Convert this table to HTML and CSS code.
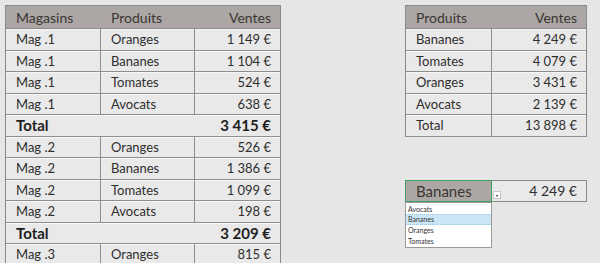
FILE: index.html
```html
<!DOCTYPE html>
<html lang="fr">
<head>
    <meta charset="UTF-8">
    <meta name="viewport" content="width=device-width, initial-scale=1.0">
    <title>Ventes par magasin</title>
    <link rel="stylesheet" href="styles.css">
</head>
<body>

<div class="feuille">

    <!-- Détail des ventes par magasin -->
    <table class="tableau detail">
        <colgroup>
            <col style="width:95px">
            <col style="width:94px">
            <col>
        </colgroup>
        <thead>
            <tr><th>Magasins</th><th>Produits</th><th class="num">Ventes</th></tr>
        </thead>
        <tbody>
            <tr><td>Mag .1</td><td>Oranges</td><td class="num">1 149 €</td></tr>
            <tr><td>Mag .1</td><td>Bananes</td><td class="num">1 104 €</td></tr>
            <tr><td>Mag .1</td><td>Tomates</td><td class="num">524 €</td></tr>
            <tr><td>Mag .1</td><td>Avocats</td><td class="num">638 €</td></tr>
            <tr class="total"><td colspan="2">Total</td><td class="num">3 415 €</td></tr>
            <tr><td>Mag .2</td><td>Oranges</td><td class="num">526 €</td></tr>
            <tr><td>Mag .2</td><td>Bananes</td><td class="num">1 386 €</td></tr>
            <tr><td>Mag .2</td><td>Tomates</td><td class="num">1 099 €</td></tr>
            <tr><td>Mag .2</td><td>Avocats</td><td class="num">198 €</td></tr>
            <tr class="total"><td colspan="2">Total</td><td class="num">3 209 €</td></tr>
            <tr><td>Mag .3</td><td>Oranges</td><td class="num">815 €</td></tr>
        </tbody>
    </table>

    <div class="colonne">
        <!-- Récapitulatif par produit -->
        <table class="tableau recap">
            <colgroup>
                <col style="width:86px">
                <col>
            </colgroup>
            <thead>
                <tr><th>Produits</th><th class="num">Ventes</th></tr>
            </thead>
            <tbody>
                <tr><td>Bananes</td><td class="num">4 249 €</td></tr>
                <tr><td>Tomates</td><td class="num">4 079 €</td></tr>
                <tr><td>Oranges</td><td class="num">3 431 €</td></tr>
                <tr><td>Avocats</td><td class="num">2 139 €</td></tr>
                <tr><td>Total</td><td class="num">13 898 €</td></tr>
            </tbody>
        </table>

        <!-- Choix du produit -->
        <div class="choix">
            <div class="cellule-choix">Bananes</div>
            <div class="cellule-valeur">4 249 €</div>
            <span class="fleche"></span>
            <ul class="liste">
                <li>Avocats</li>
                <li class="actif">Bananes</li>
                <li>Oranges</li>
                <li>Tomates</li>
            </ul>
        </div>
    </div>

</div>

</body>
</html>
```

FILE: styles.css
```css
body { margin: 0; background: #e6e6e6; font-family: Lato, "Open Sans", sans-serif; color: #2e2e2e; }
.feuille { display: flex; gap: 124px; padding: 5px; }
.colonne { display: flex; flex-direction: column; gap: 43px; }

.tableau { border-collapse: separate; border-spacing: 0; table-layout: fixed; border: 1px solid #8a8a8a; border-bottom: none; background: #e9e9e9; font-size: 13px; }
.detail { width: 276px; }
.recap { width: 182px; }
.tableau th { background: #aca7a4; color: #3a3634; font-weight: normal; text-align: left; height: 22px; padding: 0 10px; border-bottom: 1px solid #8a8a8a; font-size: 14px; }
.tableau td { height: 20.5px; padding: 0 10px; border-bottom: 1px solid #8e8e8e; border-right: 1px solid #8e8e8e; box-shadow: inset 0 1px 0 #f7f7f7; white-space: nowrap; }
.tableau td:last-child { border-right: none; }
.tableau .num { text-align: right; padding-right: 9px; }
.total td { font-weight: bold; font-size: 15px; color: #1f1f1f; border-right: none; }

.choix { position: relative; display: flex; height: 22px; }
.cellule-choix { width: 87px; background: #aca7a4; border: 1px solid #3f9e63; color: #3a3634; font-size: 15px; line-height: 20px; padding-left: 10px; box-sizing: border-box; }
.cellule-valeur { flex: 1; border: 1px solid #8a8a8a; border-left: none; font-size: 14px; line-height: 20px; text-align: right; padding-right: 9px; background: #e9e9e9; }
.fleche { position: absolute; left: 88px; top: 11px; width: 8px; height: 8px; background: #fff; border: 1px solid #c8c8c8; box-sizing: border-box; }
.fleche::after { content: ""; position: absolute; left: 2px; top: 3px; border: 1.5px solid transparent; border-top: 2px solid #222; }
.liste { position: absolute; left: 0; top: 22px; width: 87px; margin: 0; padding: 1px 0; list-style: none; background: #fff; border: 1px solid #9a9a9a; box-sizing: border-box; font-size: 7px; color: #333; }
.liste li { height: 10.5px; line-height: 10.5px; padding-left: 2px; }
.liste .actif { background: #cde6f7; border-top: 1px dotted #99c9ea; border-bottom: 1px dotted #99c9ea; height: 9px; line-height: 9px; }
```
